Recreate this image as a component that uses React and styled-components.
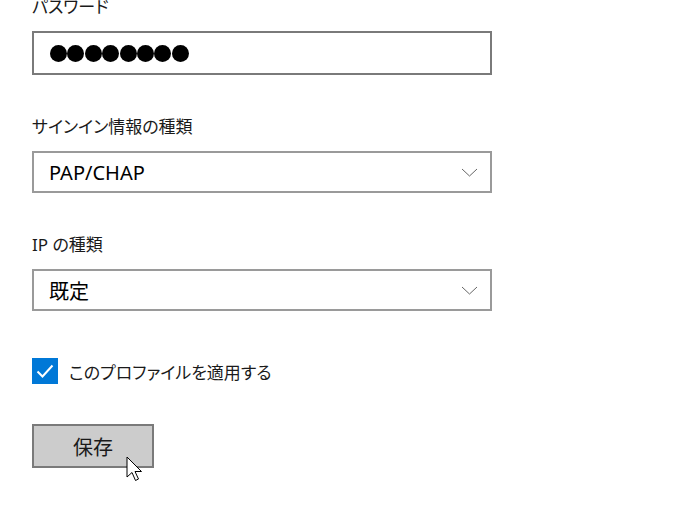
import React from "react";
import styled, { createGlobalStyle } from "styled-components";

const GlobalStyle = createGlobalStyle`
  html, body {
    margin: 0;
    padding: 0;
    background: #ffffff;
    overflow: hidden;
  }
  body {
    font-family: "Noto Sans", "Noto Sans CJK JP", sans-serif;
    color: #000;
  }
`;

const Page = styled.div`
  width: 677px;
  height: 507px;
  overflow: hidden;
  position: relative;
`;

const Form = styled.div`
  display: flex;
  flex-direction: column;
  padding-left: 32px;
  margin-top: -5px;
`;

const Field = styled.div`
  display: flex;
  flex-direction: column;
  margin-bottom: ${({ $gap }) => $gap}px;
`;

const Label = styled.div`
  font-family: "Noto Sans", "Noto Sans CJK JP", sans-serif;
  font-size: 17px;
  font-feature-settings: "palt";
  line-height: 24px;
  height: 24px;
  color: #1a1a1a;
  margin-bottom: 12px;
`;

const Box = styled.div`
  box-sizing: border-box;
  width: 460px;
  height: ${({ $h }) => $h}px;
  border: 2px solid ${({ $dark }) => ($dark ? "#7a7a7a" : "#9a9a9a")};
  background: #fff;
  display: flex;
  align-items: center;
  justify-content: space-between;
  padding: 0 12px 0 15px;
`;

const Dots = styled.div`
  display: flex;
  gap: 0.4px;
  margin-left: 1px;
`;

const Dot = styled.span`
  width: 17px;
  height: 17px;
  border-radius: 50%;
  background: #000;
`;

const Value = styled.span`
  font-family: "Noto Sans", "Noto Sans CJK JP", sans-serif;
  font-size: 20px;
  color: #000;
`;

const Chevron = () => (
  <svg width="17" height="9" viewBox="0 0 17 9">
    <path d="M1 1 L8.5 8 L16 1" fill="none" stroke="#666" strokeWidth="1" />
  </svg>
);

const CheckRow = styled.label`
  display: flex;
  align-items: center;
  gap: 11px;
  margin-bottom: 40px;
`;

const CheckBox = styled.span`
  width: 26px;
  height: 26px;
  background: #0078d7;
  display: flex;
  align-items: center;
  justify-content: center;
`;

const CheckText = styled.span`
  font-size: 17px;
  font-feature-settings: "palt";
  color: #1a1a1a;
`;

const ButtonWrap = styled.div`
  position: relative;
  width: 122px;
`;

const SaveButton = styled.button`
  box-sizing: border-box;
  width: 122px;
  height: 44px;
  background: #cccccc;
  border: 2px solid #7a7a7a;
  font-family: "Noto Sans CJK JP", sans-serif;
  font-size: 20px;
  color: #1a1a1a;
  padding: 0;
`;

const Cursor = styled.svg`
  position: absolute;
  left: 94px;
  top: 32px;
`;

export default function App() {
  return (
    <Page>
      <GlobalStyle />
      <Form>
        <Field $gap={40}>
          <Label>パスワード</Label>
          <Box $h={44} $dark>
            <Dots>
              {Array.from({ length: 8 }).map((_, i) => (
                <Dot key={i} />
              ))}
            </Dots>
          </Box>
        </Field>
        <Field $gap={40}>
          <Label>サインイン情報の種類</Label>
          <Box $h={42}>
            <Value>PAP/CHAP</Value>
            <Chevron />
          </Box>
        </Field>
        <Field $gap={47}>
          <Label>IP の種類</Label>
          <Box $h={42}>
            <Value>既定</Value>
            <Chevron />
          </Box>
        </Field>
        <CheckRow>
          <CheckBox>
            <svg width="26" height="26" viewBox="0 0 26 26">
              <path d="M5.5 13.5 L10.5 18.5 L20.5 7.5" fill="none" stroke="#fff" strokeWidth="2" />
            </svg>
          </CheckBox>
          <CheckText>このプロファイルを適用する</CheckText>
        </CheckRow>
        <ButtonWrap>
          <SaveButton>保存</SaveButton>
          <Cursor width="20" height="28" viewBox="0 0 20 28">
            <path
              d="M1 1 L1 21 L6 16.5 L9.5 24.5 L12.5 23 L9 15.5 L15.5 15.5 Z"
              fill="#fff"
              stroke="#000"
              strokeWidth="1"
              strokeLinejoin="miter"
            />
          </Cursor>
        </ButtonWrap>
      </Form>
    </Page>
  );
}
